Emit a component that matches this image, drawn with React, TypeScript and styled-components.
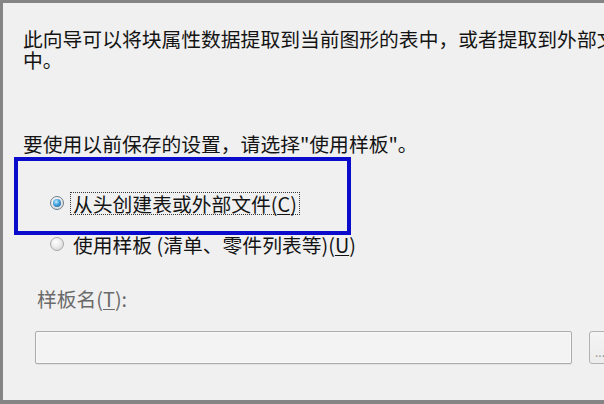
import styled, { createGlobalStyle } from "styled-components";

const GlobalStyle = createGlobalStyle`
  html, body {
    margin: 0;
    padding: 0;
    background: #f0f0f0;
  }
  * {
    box-sizing: border-box;
  }
`;

const Page = styled.div`
  position: relative;
  width: 604px;
  height: 404px;
  overflow: hidden;
  background: #f0f0f0;
  border-top: 3px solid #858585;
  border-left: 3px solid #858585;
  border-bottom: 4px solid #858585;
  font-family: "Noto Sans CJK SC", "Noto Sans", sans-serif;
  font-size: 19.8px;
  line-height: 21px;
  color: #141414;
`;

const Content = styled.div`
  width: 680px;
  padding: 25px 0 0 20px;
  display: flex;
  flex-direction: column;
`;

const Intro = styled.p`
  margin: 0;
  width: 622px;
`;

const Hint = styled.p`
  margin: 63px 0 0;
  white-space: nowrap;
`;

const Options = styled.div`
  display: flex;
  flex-direction: column;
  gap: 17px;
  margin: 37px 0 0 27px;
`;

const OptionRow = styled.label`
  display: flex;
  align-items: center;
  gap: 6px;
  height: 24px;
  white-space: nowrap;
`;

const RadioDot = styled.span<{ $checked?: boolean }>`
  position: relative;
  display: block;
  flex: none;
  width: 14px;
  height: 14px;
  border-radius: 50%;
  border: 1px solid ${(p) => (p.$checked ? "#6f7f8e" : "#a9a9a9")};
  background: radial-gradient(circle at 40% 35%, #ffffff 0%, #eeeeee 40%, #cfcfcf 100%);

  &::after {
    content: "";
    display: ${(p) => (p.$checked ? "block" : "none")};
    position: absolute;
    left: 2px;
    top: 2px;
    width: 8px;
    height: 8px;
    border-radius: 50%;
    background: radial-gradient(circle at 40% 35%, #c8eeff 0%, #4ba8e2 40%, #12508f 100%);
  }
`;

const OptionText = styled.span<{ $focused?: boolean }>`
  padding: 0 2px;
  border: 1px ${(p) => (p.$focused ? "dotted #3a3a3a" : "solid transparent")};
  line-height: 21px;
`;

const Key = styled.span`
  text-decoration: underline;
  text-underline-offset: 2px;
`;

const TemplateBlock = styled.div`
  display: flex;
  flex-direction: column;
  margin: 32px 0 0 12px;
`;

const FieldLabel = styled.div`
  padding-left: 2px;
  color: #6a6a6a;
`;

const FieldRow = styled.div`
  display: flex;
  gap: 17px;
  margin-top: 22px;
`;

const TextBox = styled.div`
  width: 537px;
  height: 33px;
  border: 1px solid #acacac;
  border-radius: 2px;
  background: #f3f3f3;
  box-shadow: inset 0 0 0 1px #f8f8f8, 0 1px 1px rgba(0, 0, 0, 0.06);
`;

const BrowseButton = styled.div`
  width: 60px;
  height: 33px;
  border: 1px solid #b2b2b2;
  border-radius: 3px;
  background: linear-gradient(#f4f4f4, #ececec);
  color: #9a9a9a;
  font-size: 12px;
  line-height: 40px;
  padding-left: 5px;
`;

const Highlight = styled.div`
  position: absolute;
  left: 11px;
  top: 154px;
  width: 337px;
  height: 78px;
  border: 4px solid #0b0bcc;
  pointer-events: none;
`;

export default function App() {
  return (
    <>
      <GlobalStyle />
      <Page>
        <Content>
          <Intro>此向导可以将块属性数据提取到当前图形的表中，或者提取到外部文件中。</Intro>
          <Hint>要使用以前保存的设置，请选择"使用样板"。</Hint>
          <Options>
            <OptionRow>
              <RadioDot $checked />
              <OptionText $focused>
                从头创建表或外部文件(<Key>C</Key>)
              </OptionText>
            </OptionRow>
            <OptionRow>
              <RadioDot />
              <OptionText>
                使用样板 (清单、零件列表等)(<Key>U</Key>)
              </OptionText>
            </OptionRow>
          </Options>
          <TemplateBlock>
            <FieldLabel>
              样板名(<Key>T</Key>):
            </FieldLabel>
            <FieldRow>
              <TextBox />
              <BrowseButton>...</BrowseButton>
            </FieldRow>
          </TemplateBlock>
        </Content>
        <Highlight />
      </Page>
    </>
  );
}
